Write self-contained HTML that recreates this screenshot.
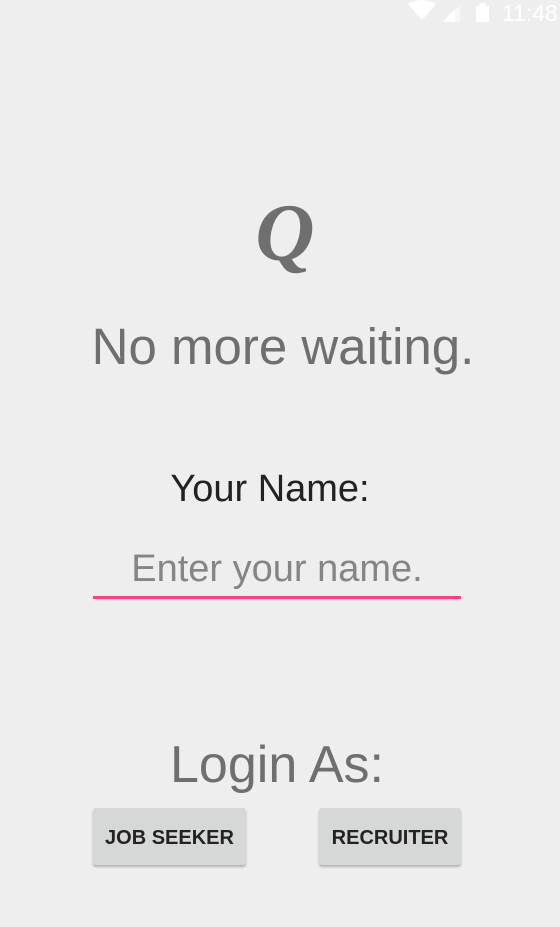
<!DOCTYPE html>
<html><head><meta charset="utf-8"><style>
html,body{margin:0;padding:0}
body{width:560px;height:927px;background:#eeeeee;position:relative;overflow:hidden;font-family:"Liberation Sans",sans-serif}
.t{position:absolute;left:0;width:560px;text-align:center;line-height:1;white-space:nowrap}
.btn{position:absolute;top:808px;height:57px;background:#d6d7d7;border-radius:3px;box-shadow:0 2px 2px rgba(0,0,0,0.25);font-weight:bold;font-size:20px;color:#222;text-align:center;line-height:60px}
</style></head><body>
<svg style="position:absolute;left:400px;top:0" width="160" height="26" viewBox="0 0 160 26">
<path d="M8 4 Q22 -4 36 4 L22 20 Z" fill="#fff"/>
<path d="M60 5 L60 22 L43 22 Z" fill="#fff" opacity="0.55"/>
<path d="M48 16 L55 9 L55 22 L43 22 Z" fill="#fff"/>
<rect x="76" y="6" width="13" height="16" fill="#fff"/>
<rect x="79" y="3" width="7" height="3" fill="#fff"/>
<text x="102" y="21" font-family="Liberation Sans" font-size="23" fill="#fff">11:48</text>
</svg>
<div class="t" style="top:192px;left:5px;font-family:'Liberation Serif',serif;font-style:italic;font-weight:bold;font-size:82px;color:#6f6f6f">Q</div>
<div class="t" style="top:321px;left:3px;font-size:51px;color:#6f6f6f">No more waiting.</div>
<div class="t" style="top:470px;left:-10px;font-size:38px;color:#222">Your Name:</div>
<div class="t" style="top:550px;left:-3px;font-size:38px;color:#858585">Enter your name.</div>
<div style="position:absolute;left:93px;top:596px;width:368px;height:3px;background:#ff4081"></div>
<div class="t" style="top:739px;left:-3px;font-size:52px;color:#6f6f6f">Login As:</div>
<div class="btn" style="left:93px;width:153px">JOB SEEKER</div>
<div class="btn" style="left:319px;width:142px">RECRUITER</div>
</body></html>
